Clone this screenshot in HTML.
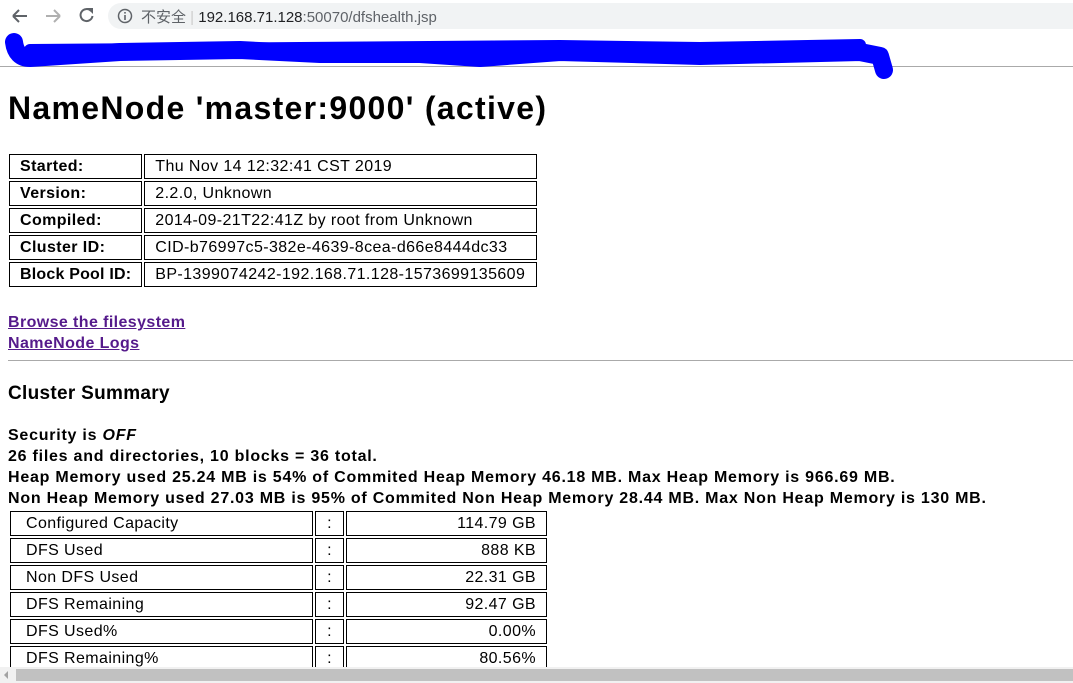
<!DOCTYPE html>
<html><head><meta charset="utf-8"><style>
body{margin:0;width:1073px;height:683px;overflow:hidden;background:#fff;font-family:"Liberation Sans","DejaVu Sans",sans-serif;position:relative;color:#000}
.a{position:absolute;white-space:nowrap}
table{position:absolute;border-collapse:separate;border-spacing:2px;font-size:16px;letter-spacing:0.4px}
td{border:1px solid #000;padding:0 10px;height:23px;line-height:23px;white-space:nowrap}
</style></head><body>
<svg class="a" style="left:10px;top:6px" width="90" height="20" viewBox="0 0 90 20">
<path d="M3 10h14M3 10l6-6M3 10l6 6" stroke="#5f6368" stroke-width="2" fill="none"/>
<path d="M36 10h14M50 10l-6-6M50 10l-6 6" stroke="#b0b0b0" stroke-width="2" fill="none"/>
<path d="M81 5a6 6 0 1 0 1.5 5" stroke="#5f6368" stroke-width="2" fill="none"/><path d="M77 2h6v6z" fill="#5f6368"/>
</svg>
<div class="a" style="left:108px;top:3px;width:965px;height:26px;border-radius:13px 0 0 13px;background:#f1f3f4"></div>
<svg class="a" style="left:117px;top:8px" width="16" height="16"><circle cx="8" cy="8" r="6.5" stroke="#5f6368" stroke-width="1.5" fill="none"/><rect x="7.2" y="7" width="1.6" height="5" fill="#5f6368"/><rect x="7.2" y="4" width="1.6" height="1.6" fill="#5f6368"/></svg>
<div class="a" style="left:141px;top:6px;font-size:15px;color:#5f6368;font-family:'Liberation Sans','Noto Sans CJK SC',sans-serif">不安全 <span style="color:#ccc">|</span> <span style="color:#202124">192.168.71.128</span>:50070/dfshealth.jsp</div>
<div class="a" style="left:0;top:66px;width:1073px;height:1px;background:#aaa"></div>
<svg class="a" style="left:0;top:30px" width="900" height="50"><path d="M14 12 Q16 28 30 28 L120 22 L240 20 L320 24 L420 24 L480 28 L560 22 L700 26 L860 22 L880 26 L884 40" stroke="#0000ff" stroke-width="18" fill="none" stroke-linecap="round" stroke-linejoin="round"/><path d="M30 20 L300 18 L560 16 L700 18 L860 15" stroke="#0000ff" stroke-width="12" fill="none" stroke-linecap="round"/></svg>
<div class="a" style="left:8px;top:90px;font-size:32px;font-weight:bold;letter-spacing:1.3px">NameNode 'master:9000' (active)</div>
<table style="left:7px;top:152px">
<tr><td style="width:117px;padding-right:4px;font-weight:bold">Started:</td><td style="width:371px">Thu Nov 14 12:32:41 CST 2019</td></tr>
<tr><td style="font-weight:bold">Version:</td><td>2.2.0, Unknown</td></tr>
<tr><td style="font-weight:bold">Compiled:</td><td>2014-09-21T22:41Z by root from Unknown</td></tr>
<tr><td style="font-weight:bold">Cluster ID:</td><td>CID-b76997c5-382e-4639-8cea-d66e8444dc33</td></tr>
<tr><td style="font-weight:bold;letter-spacing:0.2px">Block Pool ID:</td><td>BP-1399074242-192.168.71.128-1573699135609</td></tr>
</table>
<div class="a" style="left:8px;top:312px;font-size:16px;font-weight:bold;color:#551a8b;text-decoration:underline;line-height:21px;letter-spacing:0.4px">Browse the filesystem<br>NameNode Logs</div>
<div class="a" style="left:8px;top:360px;width:1065px;height:1px;background:#aaa"></div>
<div class="a" style="left:8px;top:383px;font-size:19px;font-weight:bold;letter-spacing:0.3px">Cluster Summary</div>
<div class="a" style="left:8px;top:425px;font-size:16px;font-weight:bold;line-height:21px;letter-spacing:0.76px">Security is <i>OFF</i><br>26 files and directories, 10 blocks = 36 total.<br>Heap Memory used 25.24 MB is 54% of Commited Heap Memory 46.18 MB. Max Heap Memory is 966.69 MB.<br>Non Heap Memory used 27.03 MB is 95% of Commited Non Heap Memory 28.44 MB. Max Non Heap Memory is 130 MB.</div>
<table style="left:8px;top:509px">
<tr><td style="width:281px;padding-left:15px;padding-right:5px">Configured Capacity</td><td style="width:7px;text-align:center">:</td><td style="width:179px;text-align:right">114.79 GB</td></tr>
<tr><td style="padding-left:15px">DFS Used</td><td style="text-align:center">:</td><td style="text-align:right">888 KB</td></tr>
<tr><td style="padding-left:15px">Non DFS Used</td><td style="text-align:center">:</td><td style="text-align:right">22.31 GB</td></tr>
<tr><td style="padding-left:15px">DFS Remaining</td><td style="text-align:center">:</td><td style="text-align:right">92.47 GB</td></tr>
<tr><td style="padding-left:15px">DFS Used%</td><td style="text-align:center">:</td><td style="text-align:right">0.00%</td></tr>
<tr><td style="padding-left:15px">DFS Remaining%</td><td style="text-align:center">:</td><td style="text-align:right">80.56%</td></tr>
</table>
<div class="a" style="left:0;top:667px;width:1073px;height:16px;background:#f1f1f1"></div>
<div class="a" style="left:16px;top:669px;width:1057px;height:12px;background:#c1c1c1"></div>
<div class="a" style="left:4px;top:671px;width:0;height:0;border-top:4px solid transparent;border-bottom:4px solid transparent;border-right:4px solid #a3a3a3"></div>
</body></html>
